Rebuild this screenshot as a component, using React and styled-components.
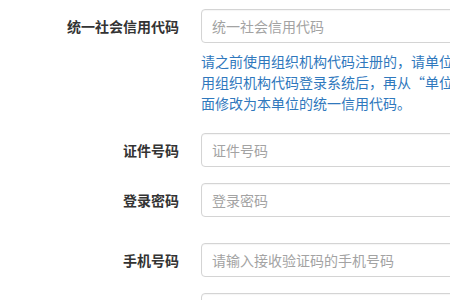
import React from 'react'
import styled, { createGlobalStyle } from 'styled-components'

const GlobalStyle = createGlobalStyle`
  html, body {
    margin: 0;
    padding: 0;
    background: #ffffff;
    overflow: hidden;
  }
  body {
    font-family: "Noto Sans CJK SC", "Liberation Sans", sans-serif;
  }
`

const Form = styled.form`
  width: 560px;
  padding-top: 9px;
`

const Group = styled.div`
  display: grid;
  grid-template-columns: 179px 330px;
  column-gap: 22px;
  margin-bottom: ${(props) => props.space || 16}px;
`

const Label = styled.label`
  font-size: 14px;
  font-weight: bold;
  color: #333333;
  line-height: 34px;
  text-align: right;
  white-space: nowrap;
`

const Input = styled.input`
  box-sizing: border-box;
  width: 100%;
  height: 34px;
  padding: 0 10px;
  border: 1px solid #d4d4d4;
  border-radius: 4px;
  background: #ffffff;
  font-family: inherit;
  font-size: 14px;
  color: #555555;
  outline: none;
  box-shadow: inset 0 1px 1px rgba(0, 0, 0, 0.04);
  &::placeholder {
    color: #a3a3a3;
  }
`

const Help = styled.p`
  grid-column: 2;
  margin: 8px 0 0;
  width: 310px;
  font-size: 14px;
  line-height: 21px;
  color: #2f78bd;
`

const fields = [
  { label: '证件号码', placeholder: '证件号码', space: 16 },
  { label: '登录密码', placeholder: '登录密码', space: 26, type: 'password' },
  { label: '手机号码', placeholder: '请输入接收验证码的手机号码', space: 16 },
  { label: '验证码', placeholder: '验证码', space: 16 },
]

const App = () => {
  return (
    <>
      <GlobalStyle />
      <Form>
        <Group space={19}>
          <Label>统一社会信用代码</Label>
          <Input placeholder="统一社会信用代码" />
          <Help>
            请之前使用组织机构代码注册的，请单位管理员使用组织机构代码登录系统后，再从“单位信息”页面修改为本单位的统一信用代码。
          </Help>
        </Group>
        {fields.map((f) => (
          <Group key={f.label} space={f.space}>
            <Label>{f.label}</Label>
            <Input type={f.type || 'text'} placeholder={f.placeholder} />
          </Group>
        ))}
      </Form>
    </>
  )
}

export default App
